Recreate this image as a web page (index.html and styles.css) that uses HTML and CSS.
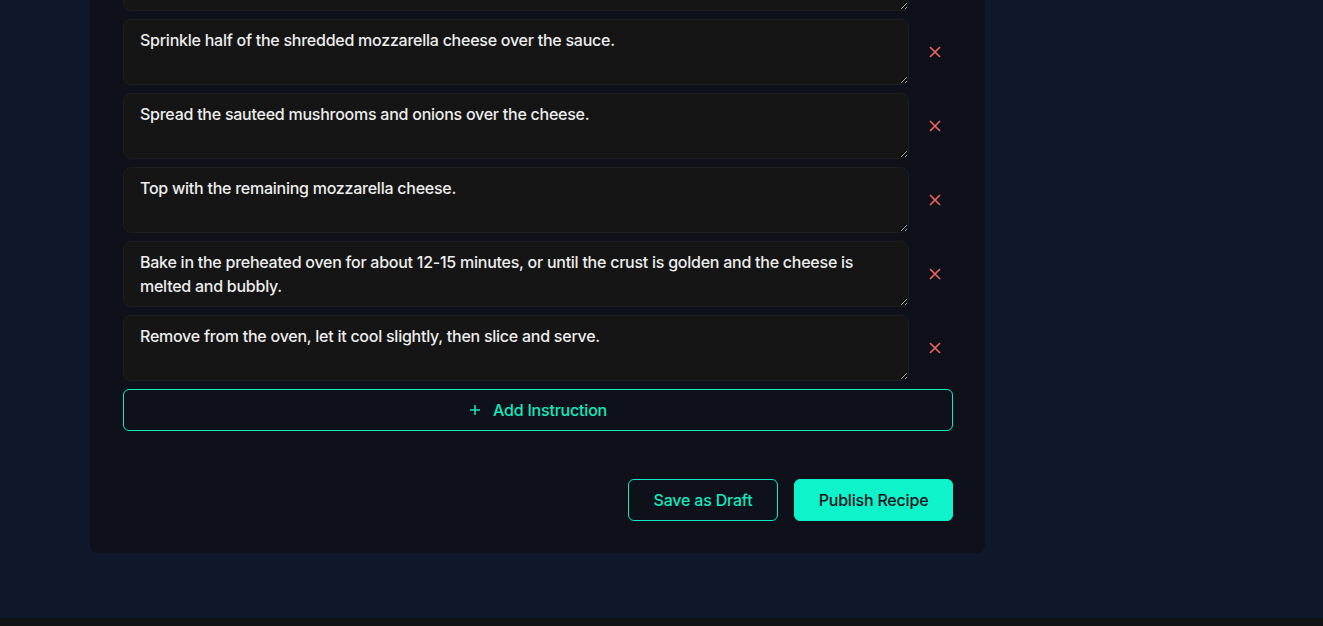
FILE: index.html
```html
<!DOCTYPE html>
<html lang="en">
<head>
<meta charset="utf-8">
<title>Create Recipe</title>
<link rel="stylesheet" href="styles.css">
</head>
<body>
<div class="viewport">
  <main class="page">
    <section class="card">
      <h2 class="section-title">Instructions</h2>
      <div class="steps">
        <div class="step">
          <textarea class="step-input" rows="2">Preheat the oven to 475°F (245°C).</textarea>
          <button class="remove" aria-label="Remove step"><svg viewBox="0 0 12 12" width="12" height="12"><path d="M1 1L11 11M11 1L1 11" /></svg></button>
        </div>
        <div class="step">
          <textarea class="step-input" rows="2">Spread the pizza sauce evenly over the rolled out dough.</textarea>
          <button class="remove" aria-label="Remove step"><svg viewBox="0 0 12 12" width="12" height="12"><path d="M1 1L11 11M11 1L1 11" /></svg></button>
        </div>
        <div class="step">
          <textarea class="step-input" rows="2">Sprinkle half of the shredded mozzarella cheese over the sauce.</textarea>
          <button class="remove" aria-label="Remove step"><svg viewBox="0 0 12 12" width="12" height="12"><path d="M1 1L11 11M11 1L1 11" /></svg></button>
        </div>
        <div class="step">
          <textarea class="step-input" rows="2">Spread the sauteed mushrooms and onions over the cheese.</textarea>
          <button class="remove" aria-label="Remove step"><svg viewBox="0 0 12 12" width="12" height="12"><path d="M1 1L11 11M11 1L1 11" /></svg></button>
        </div>
        <div class="step">
          <textarea class="step-input" rows="2">Top with the remaining mozzarella cheese.</textarea>
          <button class="remove" aria-label="Remove step"><svg viewBox="0 0 12 12" width="12" height="12"><path d="M1 1L11 11M11 1L1 11" /></svg></button>
        </div>
        <div class="step">
          <textarea class="step-input" rows="2">Bake in the preheated oven for about 12-15 minutes, or until the crust is golden and the cheese is melted and bubbly.</textarea>
          <button class="remove" aria-label="Remove step"><svg viewBox="0 0 12 12" width="12" height="12"><path d="M1 1L11 11M11 1L1 11" /></svg></button>
        </div>
        <div class="step">
          <textarea class="step-input" rows="2">Remove from the oven, let it cool slightly, then slice and serve.</textarea>
          <button class="remove" aria-label="Remove step"><svg viewBox="0 0 12 12" width="12" height="12"><path d="M1 1L11 11M11 1L1 11" /></svg></button>
        </div>
      </div>
      <button class="add-btn"><svg viewBox="0 0 12 12" width="12" height="12"><path d="M6 1V11M1 6H11" /></svg><span>Add Instruction</span></button>
      <div class="actions">
        <button class="btn btn-outline">Save as Draft</button>
        <button class="btn btn-primary">Publish Recipe</button>
      </div>
    </section>
  </main>
</div>
</body>
</html>
```
FILE: styles.css
```css
* { box-sizing: border-box; }

html, body {
  margin: 0;
  padding: 0;
  background: #111214;
  font-family: "Inter", "Liberation Sans", sans-serif;
}

.viewport {
  height: 626px;
  overflow: hidden;
  display: flex;
  flex-direction: column;
  justify-content: flex-end;
}

.page {
  flex-shrink: 0;
  background: #0f172a;
  padding: 32px 0 65px 90px;
  margin-bottom: 8px;
}

.card {
  width: 895px;
  background: #0e111a;
  border-radius: 8px;
  padding: 32px 32px 32px 33px;
}

.section-title {
  margin: 0 0 16px;
  color: #f3f4f6;
  font-size: 20px;
  font-weight: 600;
}

.steps {
  display: flex;
  flex-direction: column;
  gap: 8px;
}

.step {
  display: flex;
  align-items: center;
}

.step-input {
  flex: 0 0 786px;
  width: 786px;
  height: 66px;
  background: #151515;
  border: 1px solid #1e1e20;
  border-radius: 8px;
  padding: 8px 16px;
  color: #eeeeee;
  font-family: inherit;
  font-size: 16px;
  font-weight: 500;
  letter-spacing: -0.25px;
  line-height: 24px;
  resize: vertical;
  outline: none;
}

.remove {
  flex: 1;
  height: 44px;
  display: flex;
  align-items: center;
  justify-content: center;
  background: none;
  border: none;
  padding: 0 0 0 8px;
  cursor: pointer;
}

.remove svg path {
  stroke: #f06262;
  stroke-width: 1.7;
  fill: none;
}

.add-btn {
  margin-top: 8px;
  width: 830px;
  height: 42px;
  display: flex;
  align-items: center;
  justify-content: center;
  gap: 12px;
  background: transparent;
  border: 1px solid #13e8bf;
  border-radius: 6px;
  color: #13e8bf;
  font-family: inherit;
  font-size: 16px;
  font-weight: 500;
  letter-spacing: -0.2px;
  cursor: pointer;
}

.add-btn svg path {
  stroke: #13e8bf;
  stroke-width: 1.5;
  fill: none;
}

.actions {
  margin-top: 48px;
  display: flex;
  justify-content: flex-end;
  gap: 16px;
}

.btn {
  height: 42px;
  border-radius: 6px;
  font-family: inherit;
  font-size: 16px;
  font-weight: 500;
  letter-spacing: -0.2px;
  cursor: pointer;
}

.btn-outline {
  width: 150px;
  background: transparent;
  border: 1px solid #13e8bf;
  color: #13e8bf;
}

.btn-primary {
  width: 159px;
  background: #0ff3cb;
  border: 1px solid #0ff3cb;
  color: #0e131c;
}
```
